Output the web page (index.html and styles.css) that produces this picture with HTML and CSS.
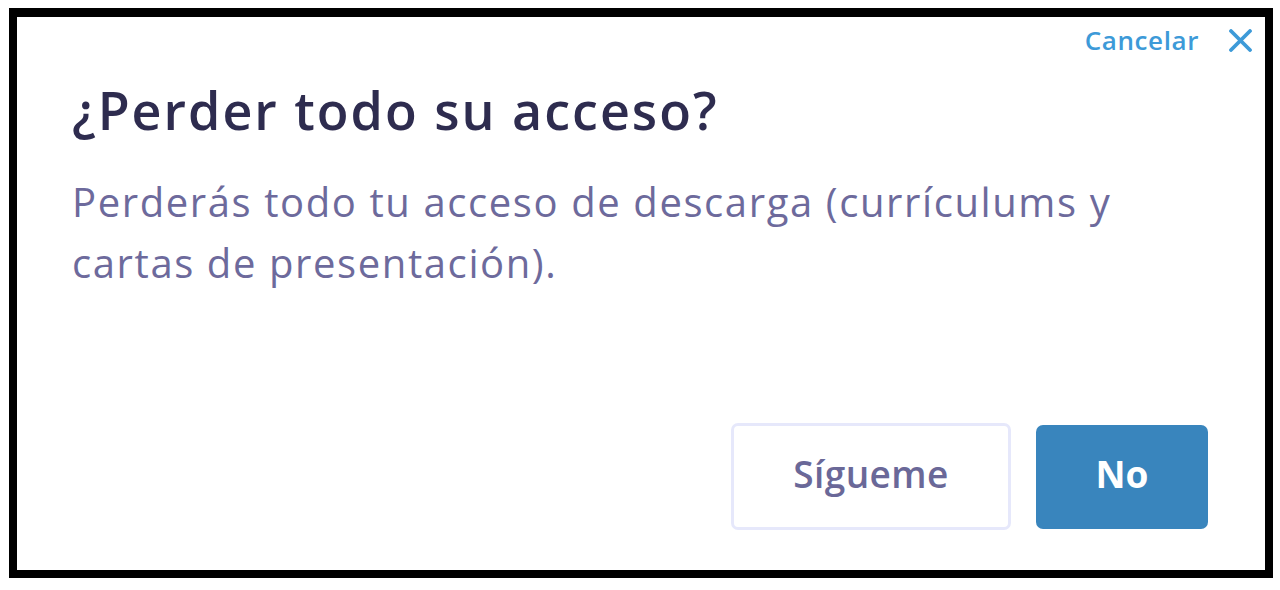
FILE: index.html
```html
<!DOCTYPE html>
<html lang="es">

<head>
    <meta charset="UTF-8">
    <meta name="viewport" content="width=device-width, initial-scale=1.0">
    <title>Perder acceso</title>
    <link rel="stylesheet" href="styles.css">
</head>

<body>
    <div class="dialog">
        <div class="topbar">
            <a href="#" class="cancel">Cancelar</a>
            <button type="button" class="close" aria-label="Cerrar">
                <svg width="25" height="23" viewBox="0 0 25 23">
                    <path d="M3 2 L22 21 M22 2 L3 21" stroke="#3d9ad8" stroke-width="3.8" stroke-linecap="round" fill="none"/>
                </svg>
            </button>
        </div>

        <div class="content">
            <h2 class="title">¿Perder todo su acceso?</h2>
            <p class="text">Perderás todo tu acceso de descarga (currículums y cartas de presentación).</p>
        </div>

        <div class="actions">
            <button type="button" class="btn btn-outline">Sígueme</button>
            <button type="button" class="btn btn-primary">No</button>
        </div>
    </div>
</body>

</html>
```

FILE: styles.css
```css
body {
    margin: 0;
    padding: 8px 0 0 9px;
    background: #fff;
    font-family: "Open Sans", "Noto Sans", sans-serif;
}

.dialog {
    box-sizing: border-box;
    width: 1264px;
    height: 570px;
    border: 8px solid #000;
    border-top-width: 9px;
    display: flex;
    flex-direction: column;
}

.topbar {
    display: flex;
    justify-content: flex-end;
    align-items: center;
    padding: 7px 12px 0 0;
    height: 32px;
}

.cancel {
    font-size: 26px;
    font-weight: 600;
    line-height: 32px;
    color: #3d9ad8;
    text-decoration: none;
    letter-spacing: 0.6px;
}

.close {
    background: none;
    border: 0;
    padding: 0;
    margin-left: 29px;
    display: flex;
    cursor: pointer;
}

.content {
    padding: 0 60px 0 55px;
}

.title {
    margin: 26px 0 0;
    font-size: 52px;
    line-height: 56px;
    font-weight: 600;
    color: #2e2c4f;
    letter-spacing: 2px;
}

.text {
    margin: 33px 0 0;
    font-size: 40px;
    line-height: 61px;
    font-weight: 500;
    color: #6d6a9c;
    letter-spacing: 1.6px;
    max-width: 1065px;
}

.actions {
    margin-top: auto;
    display: flex;
    justify-content: flex-end;
    align-items: center;
    gap: 25px;
    padding: 0 57px 40px 0;
}

.btn {
    font-family: inherit;
    border-radius: 7px;
    padding: 0 0 6px;
    cursor: pointer;
}

.btn-outline {
    width: 280px;
    height: 107px;
    background: #fff;
    border: 3px solid #e6e8fb;
    color: #6a6898;
    font-size: 37px;
    font-weight: 600;
    letter-spacing: 0.4px;
}

.btn-primary {
    width: 172px;
    height: 104px;
    background: #3985bd;
    border: 0;
    color: #fff;
    font-size: 37px;
    font-weight: 700;
}
```
